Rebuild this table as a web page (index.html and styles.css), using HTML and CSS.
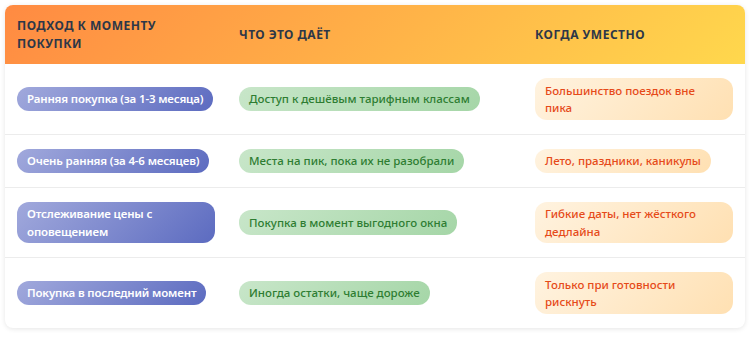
FILE: index.html
```html
<!DOCTYPE html>
<html lang="ru">
<head>
<meta charset="utf-8">
<link rel="stylesheet" href="styles.css">
</head>
<body>
<div class="card">
  <table class="grid">
    <thead>
      <tr>
        <th class="c1">Подход к моменту покупки</th>
        <th class="c2">Что это даёт</th>
        <th class="c3">Когда уместно</th>
      </tr>
    </thead>
    <tbody>
      <tr>
        <td><span class="pill p-approach">Ранняя покупка (за 1-3 месяца)</span></td>
        <td><span class="pill p-gain">Доступ к дешёвым тарифным классам</span></td>
        <td><span class="pill p-when">Большинство поездок вне пика</span></td>
      </tr>
      <tr>
        <td><span class="pill p-approach">Очень ранняя (за 4-6 месяцев)</span></td>
        <td><span class="pill p-gain">Места на пик, пока их не разобрали</span></td>
        <td><span class="pill p-when">Лето, праздники, каникулы</span></td>
      </tr>
      <tr>
        <td><span class="pill p-approach">Отслеживание цены с оповещением</span></td>
        <td><span class="pill p-gain">Покупка в момент выгодного окна</span></td>
        <td><span class="pill p-when">Гибкие даты, нет жёсткого дедлайна</span></td>
      </tr>
      <tr>
        <td><span class="pill p-approach">Покупка в последний момент</span></td>
        <td><span class="pill p-gain">Иногда остатки, чаще дороже</span></td>
        <td><span class="pill p-when">Только при готовности рискнуть</span></td>
      </tr>
    </tbody>
  </table>
</div>
</body>
</html>
```
FILE: styles.css
```css
html, body {
  margin: 0;
  padding: 0;
  background: #ffffff;
}
body {
  padding: 5px;
  font-family: "Noto Sans", "Open Sans", sans-serif;
  font-size: 11.5px;
  line-height: 1.5;
}
.card {
  width: 740px;
  border-radius: 8px;
  overflow: hidden;
  background: #ffffff;
  box-shadow: 0 1px 5px rgba(0, 0, 0, 0.10);
}
.grid {
  width: 100%;
  border-collapse: collapse;
  table-layout: fixed;
}
.c1 { width: 198px; }
.c2 { width: 272px; }
.c3 { width: 198px; }
thead tr {
  background: linear-gradient(135deg, #ff8a42 0%, #ffd84d 100%);
}
th {
  padding: 12px;
  text-align: left;
  vertical-align: middle;
  color: #2d3748;
  font-weight: 700;
  font-size: 12px;
  line-height: 1.46;
  text-transform: uppercase;
  letter-spacing: 0.5px;
}
td {
  padding: 14px 12px;
  vertical-align: middle;
  border-top: 1px solid #ececec;
}
tbody tr:first-child td {
  border-top: none;
}
.pill {
  display: block;
  width: fit-content;
  max-width: 100%;
  box-sizing: border-box;
  padding: 3.5px 10px;
  border-radius: 12px;
}
.p-approach {
  background: linear-gradient(135deg, #a1a9dc 0%, #5c6bc0 100%);
  color: #ffffff;
  font-weight: 600;
  letter-spacing: -0.15px;
}
.p-gain {
  background: linear-gradient(135deg, #c8e6c9 0%, #a5d6a7 100%);
  color: #2e7d32;
  font-weight: 500;
}
.p-when {
  background: linear-gradient(135deg, #fff3e0 0%, #ffe0b2 100%);
  color: #e64a19;
  font-weight: 500;
}
```
